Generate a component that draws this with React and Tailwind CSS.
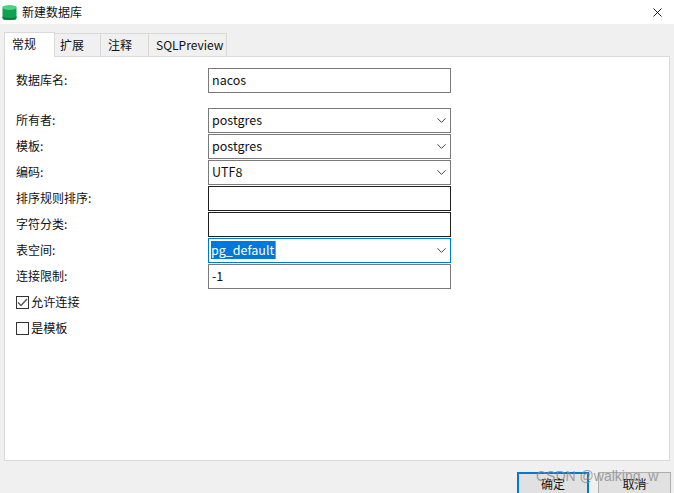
import React from 'react';
import { ChevronDown, X } from 'lucide-react';

const font = { fontFamily: '"Noto Sans CJK SC", "Liberation Sans", sans-serif' };

const Field = ({ value, select, dark, focused }) => (
  <div
    className={`w-[243px] h-[25px] shrink-0 flex items-center justify-between pl-[2px] pr-[1px] border bg-white text-[12.5px] ${
      focused ? 'border-[#0078d7]' : dark ? 'border-[#1f1f1f]' : 'border-[#7a7a7a]'
    }`}
  >
    {focused ? (
      <span className="bg-[#0078d7] text-white h-[18px] leading-[17px] pr-[1px] border-r border-[#f08030]">{value}</span>
    ) : (
      <span className="pl-[1px] text-[#111]">{value}</span>
    )}
    {select && <ChevronDown className="w-[15px] h-[15px] text-[#444]" strokeWidth={1.6} />}
  </div>
);

const Row = ({ label, ...rest }) => (
  <div className="flex items-center h-[26px]">
    <div className="w-[192px] text-[#111] text-[12px]">{label}</div>
    <Field {...rest} />
  </div>
);

const Check = ({ label, checked }) => (
  <div className="flex items-center h-[26px] gap-[2px]">
    <div className="w-[13px] h-[13px] border border-[#333] bg-white flex items-center justify-center">
      {checked && (
        <svg width="11" height="11" viewBox="0 0 11 11" fill="none">
          <path d="M1 5.5 L4 8.5 L10 2" stroke="#555" strokeWidth="1.4" />
        </svg>
      )}
    </div>
    <span className="text-[12.2px] text-[#111]">{label}</span>
  </div>
);

const Tab = ({ label, active, className }) => (
  <div
    className={`flex items-center border-t border-r border-[#d9d9d9] text-[#111] text-[12px] ${className} ${
      active ? 'bg-white border-l h-[25px] -mb-px z-10 pb-[3px]' : 'bg-[#f0f0f0] h-[23px]'
    }`}
  >
    {label}
  </div>
);

const App = () => {
  return (
    <div className="relative w-[674px] h-[493px] overflow-hidden bg-[#f0f0f0] text-[13px]" style={font}>
      {/* Title bar */}
      <div className="h-[24px] bg-white flex items-center justify-between pl-[2px] pr-[9px]">
        <div className="flex items-center gap-[5px]">
          <svg width="15" height="17" viewBox="0 0 15 17">
            <rect x="0.5" y="2" width="14" height="14" rx="2" fill="#12a150" />
            <ellipse cx="7.5" cy="3.5" rx="7" ry="2.5" fill="#4fd184" />
            <path d="M0.5 12.5 Q7.5 15.5 14.5 12.5 V14 Q7.5 18 0.5 14 Z" fill="#0b7a3a" />
          </svg>
          <span className="text-[12px] text-[#111]">新建数据库</span>
        </div>
        <X className="w-[15px] h-[15px] text-[#111]" strokeWidth={1.5} />
      </div>

      <div className="px-[4px] pt-[9px]">
        {/* Tabs */}
        <div className="flex items-end h-[23px]">
          <Tab label="常规" active className="w-[51px] pl-[7px]" />
          <Tab label="扩展" className="w-[46px] pl-[5px]" />
          <Tab label="注释" className="w-[48px] pl-[7px]" />
          <Tab label="SQLPreview" className="w-[78px] pl-[7px]" />
        </div>

        {/* Panel */}
        <div className="h-[405px] bg-white border border-[#d9d9d9] pl-[11px] pt-[10px]">
          <Row label="数据库名:" value="nacos" />
          <div className="h-[14px]" />
          <Row label="所有者:" value="postgres" select />
          <Row label="模板:" value="postgres" select />
          <Row label="编码:" value="UTF8" select />
          <Row label="排序规则排序:" dark />
          <Row label="字符分类:" dark />
          <Row label="表空间:" value="pg_default" select focused />
          <Row label="连接限制:" value="-1" />
          <Check label="允许连接" checked />
          <Check label="是模板" />
        </div>

        {/* Buttons */}
        <div className="flex justify-end gap-[9px] pt-[11px] -mr-px">
          <div className="w-[72px] h-[30px] border-2 border-[#0078d7] bg-[#e1e1e1] flex justify-center text-[12px] text-[#111] pt-[1px]">确定</div>
          <div className="w-[73px] h-[30px] border border-[#adadad] bg-[#e1e1e1] flex justify-center text-[12px] text-[#111] pt-[2px]">取消</div>
        </div>
      </div>

      {/* Watermark */}
      <div className="absolute left-[536px] top-[466px] text-[14px] text-[#8a8a8a]/80" style={{ fontFamily: '"Liberation Sans", sans-serif' }}>
        CSDN @walking_w
      </div>
    </div>
  );
};

export default App;
